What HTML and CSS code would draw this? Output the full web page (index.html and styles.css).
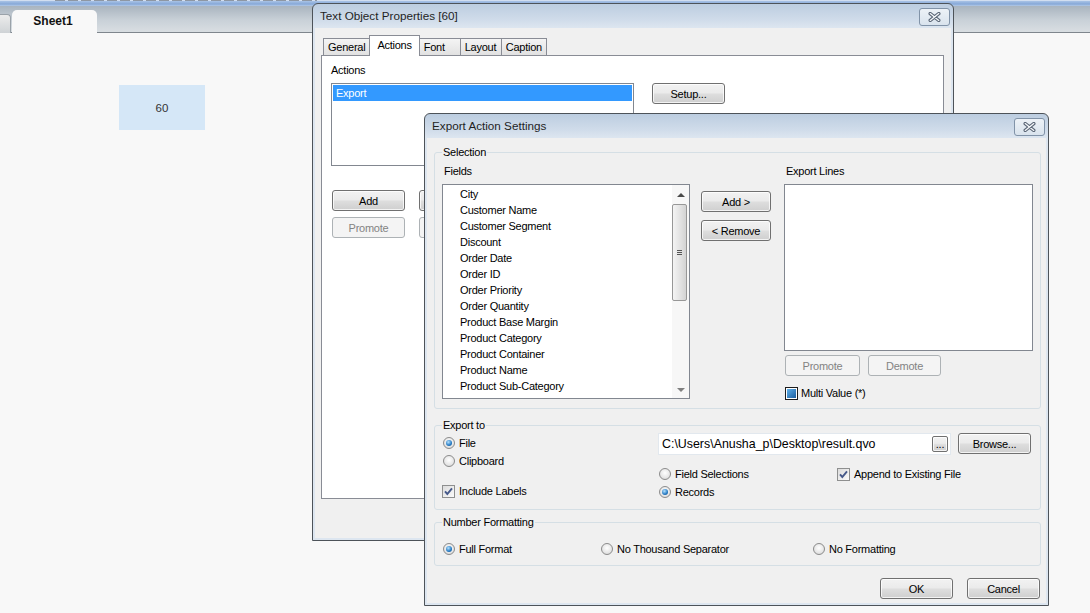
FILE: index.html
```html
<!DOCTYPE html>
<html lang="en">
<head>
<meta charset="utf-8">
<title>Export Action Settings</title>
<link rel="stylesheet" href="styles.css">
</head>
<body>
<div class="app">
  <div class="toolbar"><div class="tb-icons"></div></div>
  <div class="tabbar">
    <div class="tab-stub"></div>
    <div class="sheet-tab">Sheet1</div>
  </div>
  <div class="sheet">
    <div class="textobj">60</div>
  </div>
</div>

<div class="dlg dlg-props">
  <div class="titlebar">
    <span class="title">Text Object Properties [60]</span>
    <span class="close"><svg width="13" height="10" viewBox="0 0 13 10"><path d="M2.2 1.6 L10.8 8.4 M10.8 1.6 L2.2 8.4" stroke="#5b6777" stroke-width="3.4" stroke-linecap="round"/><path d="M2.2 1.6 L10.8 8.4 M10.8 1.6 L2.2 8.4" stroke="#f4f7fa" stroke-width="1.3" stroke-linecap="round"/></svg></span>
  </div>
  <div class="client">
    <div class="tabs">
      <div class="tab">General</div>
      <div class="tab tab-sel">Actions</div>
      <div class="tab">Font</div>
      <div class="tab">Layout</div>
      <div class="tab">Caption</div>
    </div>
    <div class="panel">
      <div class="plabel">Actions</div>
      <div class="act-row">
        <div class="listbox act-list"><div class="act-item">Export</div></div>
        <button class="btn btn-std">Setup...</button>
      </div>
      <div class="act-btns">
        <button class="btn btn-std">Add</button>
        <button class="btn btn-std" aria-label="Delete"></button>
        <button class="btn btn-std" disabled>Promote</button>
        <button class="btn btn-std" disabled aria-label="Demote"></button>
      </div>
    </div>
  </div>
</div>

<div class="dlg dlg-export">
  <div class="titlebar">
    <span class="title">Export Action Settings</span>
    <span class="close"><svg width="13" height="10" viewBox="0 0 13 10"><path d="M2.2 1.6 L10.8 8.4 M10.8 1.6 L2.2 8.4" stroke="#5b6777" stroke-width="3.4" stroke-linecap="round"/><path d="M2.2 1.6 L10.8 8.4 M10.8 1.6 L2.2 8.4" stroke="#f4f7fa" stroke-width="1.3" stroke-linecap="round"/></svg></span>
  </div>
  <div class="client exp-client">
    <div class="group sel-group">
      <span class="legend">Selection</span>
      <div class="sel-col fields-col">
        <div class="collabel">Fields</div>
        <div class="listbox fields">
          <div class="items">
            <div class="item">City</div>
            <div class="item">Customer Name</div>
            <div class="item">Customer Segment</div>
            <div class="item">Discount</div>
            <div class="item">Order Date</div>
            <div class="item">Order ID</div>
            <div class="item">Order Priority</div>
            <div class="item">Order Quantity</div>
            <div class="item">Product Base Margin</div>
            <div class="item">Product Category</div>
            <div class="item">Product Container</div>
            <div class="item">Product Name</div>
            <div class="item">Product Sub-Category</div>
          </div>
          <div class="sb">
            <div class="sb-btn sb-up"><span class="arrow-up"></span></div>
            <div class="thumb"><span class="grip"></span></div>
            <div class="sb-track"></div>
            <div class="sb-btn sb-down"><span class="arrow-down"></span></div>
          </div>
        </div>
      </div>
      <div class="mid-col">
        <button class="btn btn-mid">Add &gt;</button>
        <button class="btn btn-mid">&lt; Remove</button>
      </div>
      <div class="sel-col lines-col">
        <div class="collabel">Export Lines</div>
        <div class="listbox lines"></div>
        <div class="pd-row">
          <button class="btn btn-promote" disabled>Promote</button>
          <button class="btn btn-std" disabled>Demote</button>
        </div>
        <div class="opt multi"><span class="check mixed"></span>Multi Value (*)</div>
      </div>
    </div>

    <div class="group exp-group">
      <span class="legend">Export to</span>
      <div class="exp-left">
        <div class="opt"><span class="radio on"></span>File</div>
        <div class="opt"><span class="radio"></span>Clipboard</div>
        <div class="opt opt-labels"><span class="check"><svg width="11" height="11" viewBox="0 0 11 11"><path d="M2 5.4 L4.3 8 L9 2.4" fill="none" stroke="#46598a" stroke-width="1.9"/></svg></span>Include Labels</div>
      </div>
      <div class="exp-right">
        <div class="path-row">
          <div class="path-box"><span class="path-text">C:\Users\Anusha_p\Desktop\result.qvo</span><button class="btn btn-dots">...</button></div>
          <button class="btn btn-std">Browse...</button>
        </div>
        <div class="exp-opts">
          <div class="opt"><span class="radio"></span>Field Selections</div>
          <div class="opt"><span class="check"><svg width="11" height="11" viewBox="0 0 11 11"><path d="M2 5.4 L4.3 8 L9 2.4" fill="none" stroke="#46598a" stroke-width="1.9"/></svg></span>Append to Existing File</div>
          <div class="opt"><span class="radio on"></span>Records</div>
        </div>
      </div>
    </div>

    <div class="group nf-group">
      <span class="legend">Number Formatting</span>
      <div class="opt"><span class="radio on"></span>Full Format</div>
      <div class="opt"><span class="radio"></span>No Thousand Separator</div>
      <div class="opt"><span class="radio"></span>No Formatting</div>
    </div>

    <div class="dlg-buttons">
      <button class="btn btn-std">OK</button>
      <button class="btn btn-std">Cancel</button>
    </div>
  </div>
</div>
</body>
</html>
```

FILE: styles.css
```css
* { box-sizing: border-box; }
html, body { margin: 0; padding: 0; }
body {
  width: 1090px;
  height: 613px;
  overflow: hidden;
  position: relative;
  background: #f8f8f8;
  font-family: "Liberation Sans", Arial, sans-serif;
  font-size: 11px;
  color: #000;
}

/* ---------- application background ---------- */
.toolbar {
  height: 6px;
  background: linear-gradient(#d2def0 0, #d2def0 1px, #a9c3e6 1px, #86a8d8 4px, #b3c9e6 6px);
}
.tb-icons {
  height: 1px;
  width: 262px;
  margin-left: 55px;
  background: repeating-linear-gradient(to right, #8e97a3 0 10px, transparent 10px 13px);
}
.tabbar {
  height: 27px;
  display: flex;
  align-items: flex-end;
  background: linear-gradient(#a9b4bf, #c9d1d8 55%, #d9dee2);
  border-bottom: 1px solid #7f868d;
}
.tab-stub {
  width: 11px;
  height: 19px;
  margin-bottom: -1px;
  border-top-right-radius: 4px;
  background: linear-gradient(#ececec, #cfd3d6);
  border: 1px solid #9aa2a9;
  border-left: 0;
  border-bottom: 0;
}
.sheet-tab {
  width: 85px;
  height: 23px;
  margin-left: 1px;
  margin-bottom: -1px;
  border-radius: 5px 5px 0 0;
  background: #f8f8f8;
  font-weight: bold;
  font-size: 12px;
  line-height: 23px;
  text-align: center;
  color: #111;
  padding-right: 3px;
}
.sheet { padding: 52px 0 0 119px; }
.textobj {
  width: 86px;
  height: 45px;
  background: #d5e7f7;
  display: flex;
  align-items: center;
  justify-content: center;
  font-size: 11.5px;
  color: #333;
}

/* ---------- dialog windows ---------- */
.dlg {
  position: absolute;
  display: flex;
  flex-direction: column;
  padding: 0 2px 2px;
  border: 1px solid #4d5359;
  border-radius: 6px 6px 0 0;
  background: linear-gradient(#bccde0, #d0dcea 16px, #dde6f0 24px, #dde6f0);
}
.dlg-props { left: 312px; top: 3px; width: 642px; height: 538px; }
.dlg-export { left: 424px; top: 113px; width: 625px; height: 493px; }

.titlebar {
  height: 24px;
  flex: none;
  display: flex;
  justify-content: space-between;
  align-items: flex-start;
}
.title {
  padding-left: 5px;
  line-height: 24px;
  font-size: 11.7px;
  color: #1f1f1f;
}
.close {
  width: 31px;
  height: 18px;
  margin: 4px 1px 0 0;
  border: 1px solid #8193a8;
  border-radius: 3px;
  background: linear-gradient(#edf2f7, #d9e3ed);
  display: flex;
  align-items: center;
  justify-content: center;
}
.client {
  flex: 1;
  background: #f0f0f0;
  display: flex;
  flex-direction: column;
  letter-spacing: -0.25px;
}

/* ---------- buttons and inputs ---------- */
.btn {
  font-family: inherit;
  font-size: 11px;
  letter-spacing: -0.25px;
  height: 21px;
  padding: 0;
  border: 1px solid #707070;
  border-radius: 3px;
  background: linear-gradient(#f2f2f2, #ebebeb 45%, #dddddd 55%, #cfcfcf);
  box-shadow: inset 0 0 0 1px rgba(255, 255, 255, 0.75);
  color: #000;
  display: flex;
  align-items: center;
  justify-content: center;
}
.btn:disabled {
  border-color: #adb2b5;
  background: #f4f4f4;
  box-shadow: none;
  color: #838383;
}
.btn-std { width: 73px; }
.btn-mid { width: 70px; }
.btn-promote { width: 75px; margin-left: 1px; }

.listbox {
  border: 1px solid #828790;
  background: #fff;
}
.opt {
  display: flex;
  align-items: center;
  gap: 4px;
  height: 18px;
  white-space: nowrap;
}
.radio {
  width: 12px;
  height: 12px;
  margin-left: 1px;
  flex: none;
  border-radius: 50%;
  border: 1px solid #8b8b8b;
  background: radial-gradient(circle at 50% 40%, #ffffff, #e6e6e6 60%, #cfcfcf);
  display: flex;
  align-items: center;
  justify-content: center;
}
.radio.on::after {
  content: "";
  width: 6px;
  height: 6px;
  border-radius: 50%;
  background: radial-gradient(circle at 40% 35%, #b5e2ff, #2479c2 60%, #0d4883);
}
.check {
  width: 13px;
  height: 13px;
  flex: none;
  border: 1px solid #8e8f8f;
  background: linear-gradient(135deg, #dcdcdc, #fbfbfb);
  display: flex;
  align-items: center;
  justify-content: center;
}
.check.mixed {
  border-color: #1c1c1c;
  padding: 1px;
  background: linear-gradient(135deg, #5fb0ea, #1b5d9f) content-box, #fff;
}

/* ---------- Text Object Properties ---------- */
.tabs {
  display: flex;
  align-items: flex-end;
  height: 20px;
  margin: 7px 0 0 6px;
  padding-left: 2px;
  position: relative;
  z-index: 1;
}
.tab {
  height: 17px;
  min-width: 42px;
  padding: 0 4px;
  margin-left: -1px;
  border: 1px solid #898c95;
  border-bottom: 0;
  background: linear-gradient(#f4f4f4, #ebebeb 50%, #e1e1e1);
  line-height: 16px;
  white-space: nowrap;
}
.tab:first-child { margin-left: 0; }
.tab-sel {
  height: 21px;
  margin-bottom: -1px;
  padding: 0 7px;
  background: #fff;
  position: relative;
  line-height: 18px;
}
.panel {
  height: 444px;
  margin: 0 7px 0 6px;
  border: 1px solid #898c95;
  background: #fff;
  padding: 8px 0 0 9px;
}
.plabel { line-height: 13px; margin-bottom: 6px; }
.act-row { display: flex; gap: 18px; align-items: flex-start; }
.act-list { width: 303px; height: 83px; padding: 1px; }
.act-item {
  height: 16px;
  line-height: 16px;
  padding-left: 3px;
  background: #3399ff;
  color: #fff;
}
.act-btns {
  display: grid;
  grid-template-columns: 73px 73px;
  column-gap: 14px;
  row-gap: 6px;
  margin: 24px 0 0 1px;
}

/* ---------- Export Action Settings ---------- */
.group {
  position: relative;
  border: 1px solid #d5dfe5;
  border-radius: 3px;
  margin: 0 5px 0 7px;
}
.legend {
  position: absolute;
  top: -7px;
  left: 7px;
  padding: 0 1px;
  line-height: 13px;
  background: #f0f0f0;
}
.sel-group {
  height: 257px;
  margin-top: 14px;
  display: flex;
  align-items: flex-start;
  padding: 12px 0 0 7px;
}
.sel-col { display: flex; flex-direction: column; }
.fields-col { width: 248px; }
.lines-col { width: 249px; }
.collabel { line-height: 13px; padding-left: 2px; margin-bottom: 6px; }
.fields { height: 215px; display: flex; }
.items { flex: 1; padding-top: 1px; overflow: hidden; }
.item { height: 16px; line-height: 16px; padding-left: 17px; white-space: nowrap; }
.sb {
  width: 17px;
  display: flex;
  flex-direction: column;
  background: #f7f7f7;
}
.sb-btn { display: flex; justify-content: center; align-items: center; flex: none; }
.sb-up { height: 19px; }
.sb-down { height: 17px; }
.arrow-up {
  width: 0; height: 0;
  border-left: 4px solid transparent;
  border-right: 4px solid transparent;
  border-bottom: 4px solid #4a4a4a;
}
.arrow-down {
  width: 0; height: 0;
  border-left: 4px solid transparent;
  border-right: 4px solid transparent;
  border-top: 4px solid #808080;
}
.thumb {
  height: 97px;
  width: 15px;
  flex: none;
  border: 1px solid #979797;
  border-radius: 2px;
  background: linear-gradient(to right, #f4f4f4, #e4e4e4 50%, #d3d3d3);
  display: flex;
  align-items: center;
  justify-content: center;
}
.grip {
  width: 5px;
  height: 5px;
  background: repeating-linear-gradient(#555 0 1px, transparent 1px 2px);
}
.sb-track { flex: 1; }
.mid-col {
  width: 70px;
  margin: 0 13px 0 11px;
  padding-top: 26px;
  display: flex;
  flex-direction: column;
  gap: 8px;
}
.lines { height: 167px; }
.pd-row { display: flex; gap: 8px; margin-top: 4px; }
.multi { margin-top: 7px; gap: 3px; height: 20px; margin-left: 1px; }

.exp-group {
  height: 85px;
  margin-top: 16px;
  display: flex;
  padding-left: 7px;
}
.exp-left { width: 216px; padding-top: 8px; display: flex; flex-direction: column; }
.opt-labels { margin-top: 12px; }
.exp-right { flex: 1; padding-top: 7px; }
.path-row { display: flex; gap: 7px; align-items: flex-start; }
.path-box {
  width: 293px;
  height: 22px;
  border: 1px solid #e2e8ee;
  background: #fff;
  display: flex;
  align-items: center;
  padding: 0 2px 0 3px;
}
.path-text { flex: 1; font-size: 12.4px; letter-spacing: 0; white-space: nowrap; }
.btn-dots {
  width: 16px;
  height: 16px;
  border-radius: 2px;
  align-items: flex-end;
  line-height: 10px;
  padding-bottom: 2px;
}
.exp-opts {
  display: grid;
  grid-template-columns: 179px auto;
  margin-top: 10px;
}

.nf-group {
  height: 44px;
  margin-top: 12px;
  display: grid;
  grid-template-columns: 158px 212px auto;
  align-content: start;
  padding: 17px 0 0 7px;
}

.dlg-buttons {
  display: flex;
  justify-content: flex-end;
  gap: 14px;
  margin: 12px 6px 0 0;
}
```
